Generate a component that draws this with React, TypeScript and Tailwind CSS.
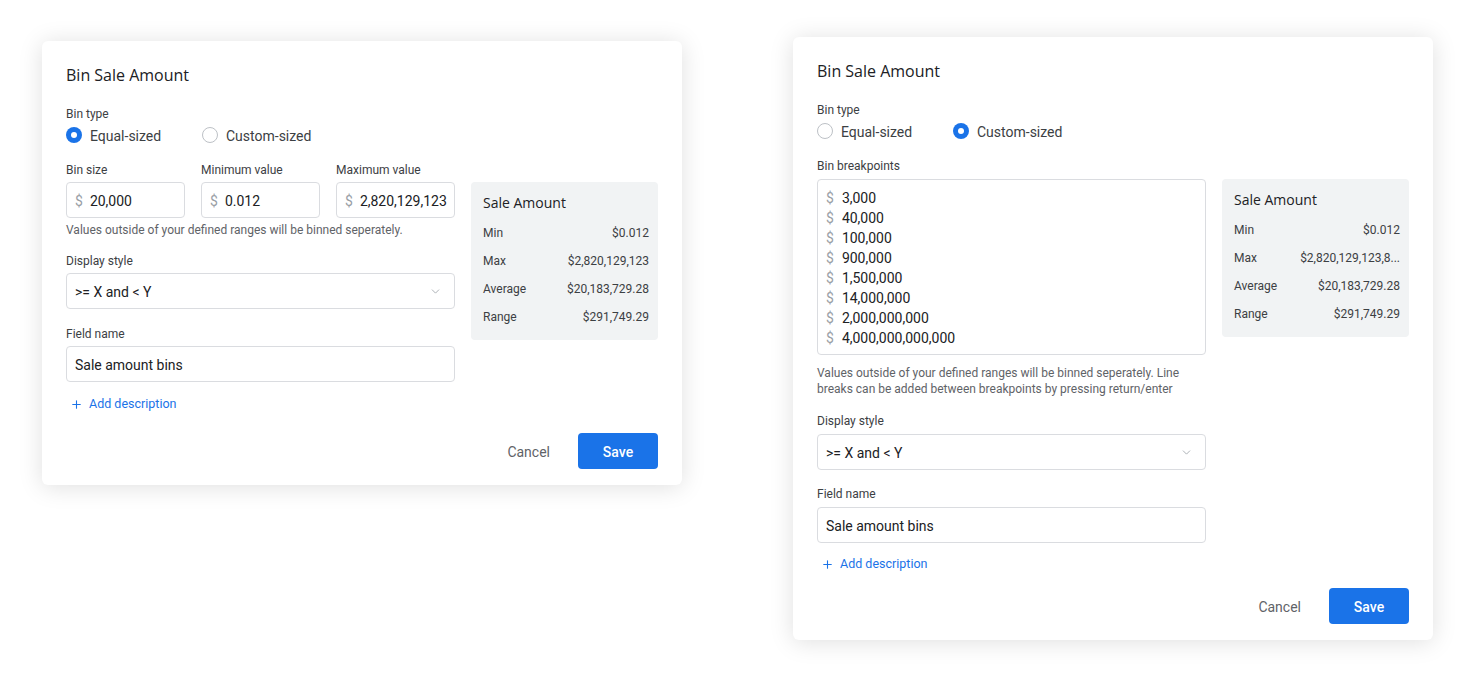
import { ChevronDown, Plus } from "lucide-react";

const stats = [
  { label: "Min", value: "$0.012" },
  { label: "Max", value: "$2,820,129,123,8..." },
  { label: "Average", value: "$20,183,729.28" },
  { label: "Range", value: "$291,749.29" },
];

const breakpoints = [
  "3,000",
  "40,000",
  "100,000",
  "900,000",
  "1,500,000",
  "14,000,000",
  "2,000,000,000",
  "4,000,000,000,000",
];

const titleFont = { fontFamily: '"Open Sans", Roboto, sans-serif' };

function Radio({ checked, label }: { checked: boolean; label: string }) {
  return (
    <div className="flex w-[136px] items-center gap-2">
      {checked ? (
        <span className="flex h-4 w-4 items-center justify-center rounded-full bg-[#1a73e8]">
          <span className="h-[6px] w-[6px] rounded-full bg-white" />
        </span>
      ) : (
        <span className="h-4 w-4 rounded-full border border-[#bdc1c6] bg-white" />
      )}
      <span className="pt-px text-sm leading-5 text-[#3c4043]">{label}</span>
    </div>
  );
}

function Label({ children }: { children: React.ReactNode }) {
  return <div className="-mb-px pt-px text-xs leading-4 text-[#3c4043]">{children}</div>;
}

function MoneyInput({ value }: { value: string }) {
  return (
    <div className="flex h-9 w-[119px] items-center overflow-hidden rounded border border-[#dadce0] bg-white pl-[8px] pt-px text-sm">
      <span className="text-[#9aa0a6]">$</span>
      <span className="ml-[7px] whitespace-nowrap text-[#202124]">{value}</span>
    </div>
  );
}

function StatsPanel({ truncateMax }: { truncateMax: boolean }) {
  return (
    <div className="w-[187px] rounded bg-[#f1f3f4] pb-[15px] pl-3 pr-[9px] pt-[11px]">
      <div className="text-sm leading-5 font-medium text-[#202124]" style={titleFont}>
        Sale Amount
      </div>
      <div className="mt-3 flex flex-col gap-3">
        {stats.map((s) => (
          <div key={s.label} className="flex h-4 items-center justify-between text-xs leading-4 text-[#3c4043]">
            <span>{s.label}</span>
            <span className="whitespace-nowrap">
              {s.label === "Max" && !truncateMax ? "$2,820,129,123" : s.value}
            </span>
          </div>
        ))}
      </div>
    </div>
  );
}

function Footer() {
  return (
    <div className="flex items-center justify-end">
      <button className="mr-3 h-9 px-4 pt-px text-sm text-[#5f6368]">Cancel</button>
      <button className="h-9 w-20 rounded bg-[#1a73e8] pt-px text-sm font-medium text-white">Save</button>
    </div>
  );
}

function AddDescription() {
  return (
    <div className="flex h-5 items-center pl-[4px] pt-px text-[12.5px] text-[#1a73e8]">
      <Plus size={13} strokeWidth={2} />
      <span className="ml-[6px]">Add description</span>
    </div>
  );
}

function SelectBox() {
  return (
    <div className="flex h-9 items-center justify-between rounded border border-[#dadce0] bg-white pl-2 pr-[12px] pt-px text-sm text-[#202124]">
      <span>{">= X and < Y"}</span>
      <ChevronDown size={13} strokeWidth={1.5} className="text-[#9aa0a6]" />
    </div>
  );
}

function TextInput({ value }: { value: string }) {
  return (
    <div className="flex h-9 items-center rounded border border-[#dadce0] bg-white pl-2 pt-px text-sm text-[#202124]">
      {value}
    </div>
  );
}

function Header({ custom }: { custom: boolean }) {
  return (
    <>
      <div className="-mb-px pt-px text-base leading-6 font-medium text-[#202124]" style={titleFont}>
        Bin Sale Amount
      </div>
      <div className="mt-[19px]">
        <Label>Bin type</Label>
      </div>
      <div className="mt-1 flex h-5 items-center">
        <Radio checked={!custom} label="Equal-sized" />
        <Radio checked={custom} label="Custom-sized" />
      </div>
    </>
  );
}

function EqualDialog() {
  return (
    <div className="mt-1 w-[640px] rounded-md bg-white px-6 pb-4 pt-[21px] shadow-[0_2px_24px_rgba(0,0,0,0.13)]">
      <Header custom={false} />
      <div className="mt-4 flex gap-4">
        <div className="w-[389px]">
          <div className="flex gap-4">
            <div>
              <Label>Bin size</Label>
              <div className="mt-[5px]">
                <MoneyInput value="20,000" />
              </div>
            </div>
            <div>
              <Label>Minimum value</Label>
              <div className="mt-[5px]">
                <MoneyInput value="0.012" />
              </div>
            </div>
            <div>
              <Label>Maximum value</Label>
              <div className="mt-[5px]">
                <MoneyInput value="2,820,129,123" />
              </div>
            </div>
          </div>
          <div className="-mb-px mt-[3px] pt-px text-xs leading-4 text-[#5f6368]">
            Values outside of your defined ranges will be binned seperately.
          </div>
          <div className="mt-[15px]">
            <Label>Display style</Label>
          </div>
          <div className="mt-[5px]">
            <SelectBox />
          </div>
          <div className="mt-4">
            <Label>Field name</Label>
          </div>
          <div className="mt-[5px]">
            <TextInput value="Sale amount bins" />
          </div>
          <div className="mt-3">
            <AddDescription />
          </div>
        </div>
        <div className="pt-[21px]">
          <StatsPanel truncateMax={false} />
        </div>
      </div>
      <div className="mt-[19px]">
        <Footer />
      </div>
    </div>
  );
}

function CustomDialog() {
  return (
    <div className="w-[640px] rounded-md bg-white px-6 pb-4 pt-[21px] shadow-[0_2px_24px_rgba(0,0,0,0.13)]">
      <Header custom={true} />
      <div className="mt-4 flex gap-4">
        <div className="w-[389px]">
          <Label>Bin breakpoints</Label>
          <div className="mt-[6px] h-[176px] rounded border border-[#dadce0] bg-white pl-[8px] pt-[8px] text-sm">
            {breakpoints.map((b) => (
              <div key={b} className="flex h-5 items-center">
                <span className="text-[#9aa0a6]">$</span>
                <span className="ml-[8px] text-[#202124]">{b}</span>
              </div>
            ))}
          </div>
          <div className="-mb-px mt-[9px] pt-px text-xs leading-4 text-[#5f6368]">
            Values outside of your defined ranges will be binned seperately. Line breaks can be added between
            breakpoints by pressing return/enter
          </div>
          <div className="mt-4">
            <Label>Display style</Label>
          </div>
          <div className="mt-[6px]">
            <SelectBox />
          </div>
          <div className="mt-[15px]">
            <Label>Field name</Label>
          </div>
          <div className="mt-[6px]">
            <TextInput value="Sale amount bins" />
          </div>
          <div className="mt-[11px]">
            <AddDescription />
          </div>
        </div>
        <div className="pt-[22px]">
          <StatsPanel truncateMax={true} />
        </div>
      </div>
      <div className="mt-[14px]">
        <Footer />
      </div>
    </div>
  );
}

export default function App() {
  return (
    <div
      className="flex h-[687px] w-[1475px] items-start gap-[111px] bg-white pl-[42px] pt-[37px]"
      style={{ fontFamily: "Roboto, 'Liberation Sans', sans-serif" }}
    >
      <EqualDialog />
      <CustomDialog />
    </div>
  );
}
